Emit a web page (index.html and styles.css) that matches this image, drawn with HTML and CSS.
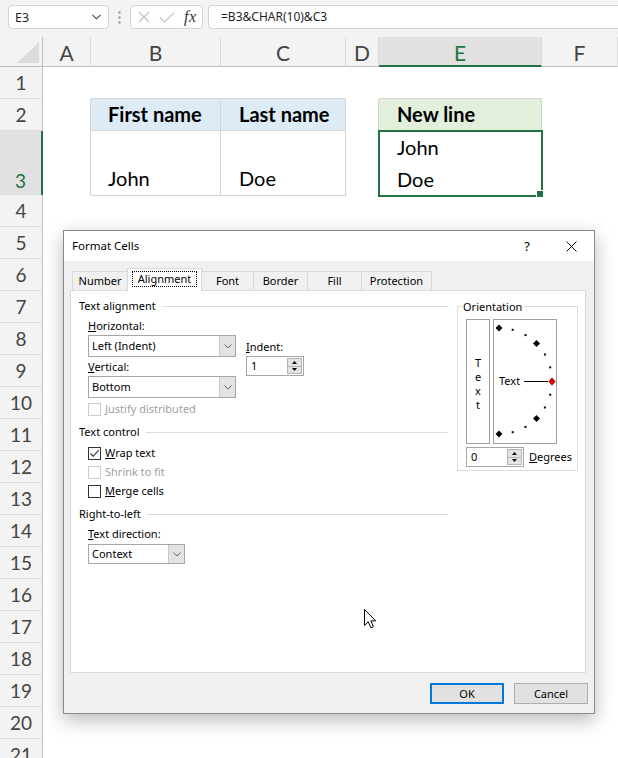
FILE: index.html
```html
<!DOCTYPE html>
<html lang="en">
<head>
<meta charset="utf-8">
<title>Format Cells</title>
<link rel="stylesheet" href="styles.css">
</head>
<body>
<div class="app">
  <div class="topbar">
    <div class="namebox">
      <span>E3</span>
      <svg class="chev" width="9" height="6" viewBox="0 0 9 6"><path d="M0.5 0.8 L4.5 4.8 L8.5 0.8" fill="none" stroke="#444" stroke-width="1.1"/></svg>
    </div>
    <div class="grip">
      <svg width="3" height="13" viewBox="0 0 3 13"><rect x="0.5" y="0.5" width="2" height="2" fill="#8a8a8a"/><rect x="0.5" y="5.5" width="2" height="2" fill="#8a8a8a"/><rect x="0.5" y="10.5" width="2" height="2" fill="#8a8a8a"/></svg>
    </div>
    <div class="fxbox">
      <svg width="12" height="12" viewBox="0 0 12 12"><path d="M1 1 L11 11 M11 1 L1 11" stroke="#c2c2c2" stroke-width="1.1" fill="none"/></svg>
      <svg class="chk" width="16" height="11" viewBox="0 0 16 11"><path d="M1 5.5 L5.5 10 L15 0.8" fill="none" stroke="#c2c2c2" stroke-width="1.1"/></svg>
      <span class="fx">fx</span>
    </div>
    <div class="formula">=B3&amp;CHAR(10)&amp;C3</div>
  </div>

  <div class="sheet">
    <div class="row hdr">
      <div class="corner"><svg width="22" height="21" viewBox="0 0 22 21"><path d="M22 0 L22 21 L0 21 Z" fill="#dcdcdc"/></svg></div>
      <div class="ch">A</div><div class="ch">B</div><div class="ch">C</div><div class="ch">D</div><div class="ch ch-on">E</div><div class="ch">F</div>
    </div>
    <div class="row">
      <div class="rh">1</div><div class="c"></div><div class="c bb"></div><div class="c bb"></div><div class="c"></div><div class="c bb"></div><div class="c"></div>
    </div>
    <div class="row">
      <div class="rh">2</div><div class="c br"></div><div class="c br bb th blue">First name</div><div class="c br bb th blue indent2">Last name</div><div class="c br"></div><div class="c br th green">New line</div><div class="c"></div>
    </div>
    <div class="row tall">
      <div class="rh rh-on">3</div><div class="c br"></div><div class="c br bb td">John</div><div class="c br bb td indent2">Doe</div><div class="c"></div><div class="c cur">John<br>Doe</div><div class="c"></div>
    </div>
    <div class="row"><div class="rh">4</div></div>
    <div class="row"><div class="rh">5</div></div>
    <div class="row"><div class="rh">6</div></div>
    <div class="row"><div class="rh">7</div></div>
    <div class="row"><div class="rh">8</div></div>
    <div class="row"><div class="rh">9</div></div>
    <div class="row"><div class="rh">10</div></div>
    <div class="row"><div class="rh">11</div></div>
    <div class="row"><div class="rh">12</div></div>
    <div class="row"><div class="rh">13</div></div>
    <div class="row"><div class="rh">14</div></div>
    <div class="row"><div class="rh">15</div></div>
    <div class="row"><div class="rh">16</div></div>
    <div class="row"><div class="rh">17</div></div>
    <div class="row"><div class="rh">18</div></div>
    <div class="row"><div class="rh">19</div></div>
    <div class="row"><div class="rh">20</div></div>
    <div class="row"><div class="rh">21</div></div>
  </div>

  <div class="dialog">
    <div class="titlebar">
      <span class="title">Format Cells</span>
      <span class="help">?</span>
      <svg class="close" width="11" height="11" viewBox="0 0 11 11"><path d="M0.5 0.5 L10.5 10.5 M10.5 0.5 L0.5 10.5" stroke="#111" stroke-width="1" fill="none"/></svg>
    </div>
    <div class="dbody">
      <div class="tabs">
        <div class="tab tab-number">Number</div>
        <div class="tab tab-align tab-on"><span class="focus">Alignment</span></div>
        <div class="tab tab-font">Font</div>
        <div class="tab tab-border">Border</div>
        <div class="tab tab-fill">Fill</div>
        <div class="tab tab-prot">Protection</div>
      </div>
      <div class="panel">
        <div class="leftcol">
          <div class="gh">Text alignment</div>
          <div class="ind ind-align">
            <div class="hv">
              <div class="hvl">
                <div class="lbl"><u>H</u>orizontal:</div>
                <div class="dd dd-wide dd-first"><span>Left (Indent)</span><b><svg width="8" height="5" viewBox="0 0 8 5"><path d="M0.5 0.5 L4 4 L7.5 0.5" fill="none" stroke="#666" stroke-width="1"/></svg></b></div>
                <div class="lbl lbl-v"><u>V</u>ertical:</div>
                <div class="dd dd-wide dd-first"><span>Bottom</span><b><svg width="8" height="5" viewBox="0 0 8 5"><path d="M0.5 0.5 L4 4 L7.5 0.5" fill="none" stroke="#666" stroke-width="1"/></svg></b></div>
              </div>
              <div class="indent">
                <div class="lbl"><u>I</u>ndent:</div>
                <div class="spin spin-indent"><span>1</span><div class="spb"><i><svg width="5" height="3" viewBox="0 0 5 3"><path d="M2.5 0 L5 3 L0 3 Z" fill="#000"/></svg></i><i><svg width="5" height="3" viewBox="0 0 5 3"><path d="M0 0 L5 0 L2.5 3 Z" fill="#000"/></svg></i></div></div>
              </div>
            </div>
            <div class="cbrow dis cb-justify"><span class="cb"></span>Justify distributed</div>
          </div>
          <div class="gh gh-gap">Text control</div>
          <div class="ind ind-ctrl">
            <div class="cbrow"><span class="cb"><svg width="11" height="11" viewBox="0 0 11 11"><path d="M1.5 5.5 L4.2 8.3 L9.8 2" fill="none" stroke="#222" stroke-width="1.1"/></svg></span><u>W</u>rap text</div>
            <div class="cbrow dis cb-next"><span class="cb"></span>Shrink to fit</div>
            <div class="cbrow cb-next"><span class="cb"></span><u>M</u>erge cells</div>
          </div>
          <div class="gh gh-gap">Right-to-left</div>
          <div class="ind ind-rtl">
            <div class="lbl"><u>T</u>ext direction:</div>
            <div class="dd dd-narrow"><span>Context</span><b><svg width="8" height="5" viewBox="0 0 8 5"><path d="M0.5 0.5 L4 4 L7.5 0.5" fill="none" stroke="#666" stroke-width="1"/></svg></b></div>
          </div>
        </div>
        <fieldset class="orient">
          <legend>Orientation</legend>
          <div class="obox">
            <div class="vtext"><span>T</span><span>e</span><span>x</span><span>t</span></div>
            <div class="dial">
              <svg width="62" height="123" viewBox="0 0 62 123">
                <g fill="#000">
                  <polygon points="5,4.5 8.5,8 5,11.5 1.5,8"/>
                  <rect x="17.7" y="8.8" width="2" height="2"/>
                  <rect x="30.5" y="14.1" width="2" height="2"/>
                  <polygon points="42.5,20 46,23.5 42.5,27 39,23.5"/>
                  <rect x="49.9" y="33.5" width="2" height="2"/>
                  <rect x="55.2" y="46.3" width="2" height="2"/>
                  <rect x="55.2" y="73.7" width="2" height="2"/>
                  <rect x="49.9" y="86.5" width="2" height="2"/>
                  <polygon points="42.5,95 46,98.5 42.5,102 39,98.5"/>
                  <rect x="30.5" y="105.9" width="2" height="2"/>
                  <rect x="17.7" y="111.2" width="2" height="2"/>
                  <polygon points="5,110.5 8.5,114 5,117.5 1.5,114"/>
                </g>
                <text x="5" y="65" font-family="Noto Sans, sans-serif" font-size="11" fill="#000">Text</text>
                <path d="M30 61.5 L54 61.5" stroke="#000" stroke-width="1"/>
                <polygon points="58,57.8 61.2,61.5 58,65.2 54.8,61.5" fill="#e00000" stroke="#7a0000" stroke-width="0.6"/>
              </svg>
            </div>
          </div>
          <div class="deg">
            <div class="spin spin-deg"><span>0</span><div class="spb"><i><svg width="5" height="3" viewBox="0 0 5 3"><path d="M2.5 0 L5 3 L0 3 Z" fill="#000"/></svg></i><i><svg width="5" height="3" viewBox="0 0 5 3"><path d="M0 0 L5 0 L2.5 3 Z" fill="#000"/></svg></i></div></div>
            <span><u>D</u>egrees</span>
          </div>
        </fieldset>
      </div>
      <div class="btns">
        <button class="btn ok">OK</button>
        <button class="btn">Cancel</button>
      </div>
    </div>
  </div>

  <svg class="cursor" width="13" height="20" viewBox="0 0 13 20"><path d="M0.5 0.5 L0.5 16.5 L4.3 12.8 L6.9 18.8 L9.4 17.7 L6.9 11.9 L11.7 11.9 Z" fill="#fff" stroke="#000" stroke-width="1" stroke-linejoin="miter"/></svg>
</div>
</body>
</html>
```

FILE: styles.css
```css
* { box-sizing: border-box; margin: 0; padding: 0; }
html, body { width: 618px; height: 758px; overflow: hidden; }
body { background: #fff; font-family: "Noto Sans", "DejaVu Sans", sans-serif; color: #000; }
.app { position: relative; width: 618px; height: 758px; overflow: hidden; }

/* formula bar */
.topbar { display: flex; align-items: flex-start; height: 37px; padding: 5px 0 0 8px; background: #f3f3f3; }
.namebox { display: flex; align-items: center; justify-content: space-between; width: 101px; height: 24px; padding: 0 7px 0 6px; background: #fff; border: 1px solid #d4d4d4; border-radius: 4px; font-size: 12.5px; color: #1f1f1f; }
.grip { display: flex; align-items: center; justify-content: center; width: 21px; height: 24px; }
.fxbox { display: flex; align-items: center; width: 73px; height: 24px; padding-left: 7px; background: #fff; border: 1px solid #d4d4d4; border-radius: 4px; }
.fxbox .chk { margin-left: 9px; }
.fx { margin-left: 9px; font: italic 16px "Liberation Serif", serif; color: #333; letter-spacing: 0.5px; }
.formula { flex: 1; height: 24px; margin-left: 5px; padding-left: 12px; background: #fff; border: 1px solid #d4d4d4; border-right: 0; border-radius: 4px 0 0 4px; font-size: 12px; line-height: 22px; color: #1f1f1f; }

/* sheet */
.row { display: grid; grid-template-columns: 43px 48px 130px 125px 33px 163px 1fr; height: 32px; }
.row.hdr { height: 30px; background: #f3f3f3; }
.row.tall { height: 64px; }
.corner { display: flex; align-items: flex-end; justify-content: flex-end; padding: 0 3px 3px 0; border-right: 1px solid #bfbfbf; border-bottom: 1px solid #bfbfbf; }
.ch { display: flex; align-items: center; justify-content: center; padding-top: 2px; border-right: 1px solid #d9d9d9; border-bottom: 1px solid #bfbfbf; font: 21px Lato, sans-serif; color: #444; }
.ch-on { background: #e1e1e1; border-bottom: 2px solid #217346; color: #217346; padding-top: 3px; }
.rh { display: flex; align-items: center; justify-content: center; background: #f3f3f3; border-right: 1px solid #bfbfbf; border-bottom: 1px solid #dadada; font: 19px Lato, sans-serif; color: #444; }
.rh-on { align-items: flex-end; padding-bottom: 3px; background: #e1e1e1; border-right: 2px solid #217346; color: #217346; }
.c { border-right: 1px solid transparent; border-bottom: 1px solid transparent; padding-left: 17px; font: 20px/31px Lato, sans-serif; color: #000; white-space: nowrap; }
.br { border-right-color: #d4d4d4; }
.bb { border-bottom-color: #d4d4d4; }
.th { font-weight: 700; }
.blue { background: #ddebf7; }
.green { background: #e2efda; padding-left: 18px; }
.indent2 { padding-left: 18px; }
.td { display: flex; align-items: flex-end; padding-bottom: 1px; }
.cur { position: relative; padding-left: 18px; line-height: 32px; outline: 2px solid #217346; outline-offset: -1px; }
.cur::after { content: ""; position: absolute; right: -3px; bottom: -3px; width: 6px; height: 6px; background: #217346; border: 1px solid #fff; }

/* dialog */
.dialog { position: absolute; left: 63px; top: 230px; width: 532px; height: 484px; background: #f0f0f0; border: 1px solid #8a8a8a; box-shadow: 0 6px 18px rgba(0, 0, 0, 0.28); font-size: 11px; line-height: 16px; color: #000; }
.titlebar { display: flex; align-items: center; height: 30px; padding-left: 8px; background: #fff; }
.title { flex: 1; font-size: 11.5px; }
.help { margin-right: 36px; font-size: 13px; }
.close { margin-right: 17px; }
.dbody { padding: 7px 8px 0 6px; }

.tabs { display: flex; align-items: flex-end; height: 22px; padding-left: 2px; }
.tab { display: flex; align-items: center; justify-content: center; height: 19px; margin-left: -1px; border: 1px solid #d9d9d9; border-bottom: 0; background: #f0f0f0; }
.tab:first-child { margin-left: 0; }
.tab-on { position: relative; height: 23px; margin-bottom: -1px; padding: 0 0 2px; background: #fff; }
.focus { padding: 0 5px; line-height: 14px; outline: 1px dotted #000; outline-offset: 0; }
.tab-number { width: 56px; }
.tab-align { width: 75px; }
.tab-font { width: 53px; }
.tab-border { width: 55px; }
.tab-fill { width: 55px; }
.tab-prot { width: 71px; }

.panel { display: flex; gap: 9px; height: 383px; padding: 7px 0 0 8px; background: #fff; border: 1px solid #d9d9d9; }
.leftcol { width: 369px; }
.gh { display: flex; align-items: center; height: 16px; }
.gh::after { content: ""; flex: 1; height: 1px; margin-left: 6px; background: #dcdcdc; }
.gh-gap { margin-top: 7px; }
.ind { padding-left: 9px; }
.ind-align { margin-top: 4px; }
.ind-ctrl { margin-top: 5px; }
.ind-rtl { margin-top: 4px; }
.hv { display: flex; }
.hvl { width: 148px; }
.lbl { height: 16px; }
.lbl-v { margin-top: 2px; }
.indent { margin-left: 10px; padding-top: 21px; }

.dd { display: flex; height: 22px; background: #fff; border: 1px solid #a6a6a6; }
.dd-first { margin-top: 1px; }
.dd-wide { width: 148px; }
.dd-narrow { width: 97px; height: 20px; margin-top: 2px; }
.dd span { flex: 1; padding-left: 3px; line-height: 20px; }
.dd-narrow span { line-height: 18px; }
.dd b { display: flex; align-items: center; justify-content: center; width: 16px; background: #e3e3e3; border-left: 1px solid #c9c9c9; }

.spin { display: flex; height: 20px; background: #fff; border: 1px solid #a6a6a6; }
.spin-indent { width: 58px; margin-top: 1px; }
.spin-deg { width: 58px; }
.spin span { flex: 1; padding-left: 4px; line-height: 18px; }
.spb { display: flex; flex-direction: column; width: 16px; padding: 1px 1px 1px 0; }
.spb i { display: flex; flex: 1; align-items: center; justify-content: center; background: #e3e3e3; border: 1px solid #b5b5b5; }
.spb i + i { border-top: 0; }

.cbrow { display: flex; align-items: center; height: 16px; }
.cb-justify { margin-top: 3px; }
.cb-next { margin-top: 3px; }
.cb { display: flex; align-items: center; justify-content: center; width: 13px; height: 13px; margin-right: 4px; background: #fff; border: 1px solid #333; }
.dis { color: #a0a0a0; }
.dis .cb { border-color: #cccccc; }

.orient { width: 121px; height: 173px; margin: 0; padding: 0 0 3px 8px; border: 1px solid #dcdcdc; min-width: 0; }
.orient legend { margin-left: -4px; padding: 0 1px; line-height: 17px; }
.obox { display: flex; gap: 3px; margin-top: 4px; }
.vtext { display: flex; flex-direction: column; align-items: center; justify-content: center; width: 24px; height: 125px; padding-top: 4px; border: 1px solid #a0a0a0; line-height: 14px; }
.dial { width: 64px; height: 125px; border: 1px solid #a0a0a0; }
.dial svg { display: block; }
.deg { display: flex; align-items: center; gap: 5px; margin-top: 3px; }

.btns { display: flex; justify-content: flex-end; gap: 10px; margin-top: 10px; margin-right: -2px; }
.btn { width: 74px; height: 21px; background: #e1e1e1; border: 1px solid #adadad; font: 11px "Noto Sans", sans-serif; color: #000; }
.btn.ok { border: 2px solid #0078d7; }

.cursor { position: absolute; left: 364px; top: 609px; }
```
